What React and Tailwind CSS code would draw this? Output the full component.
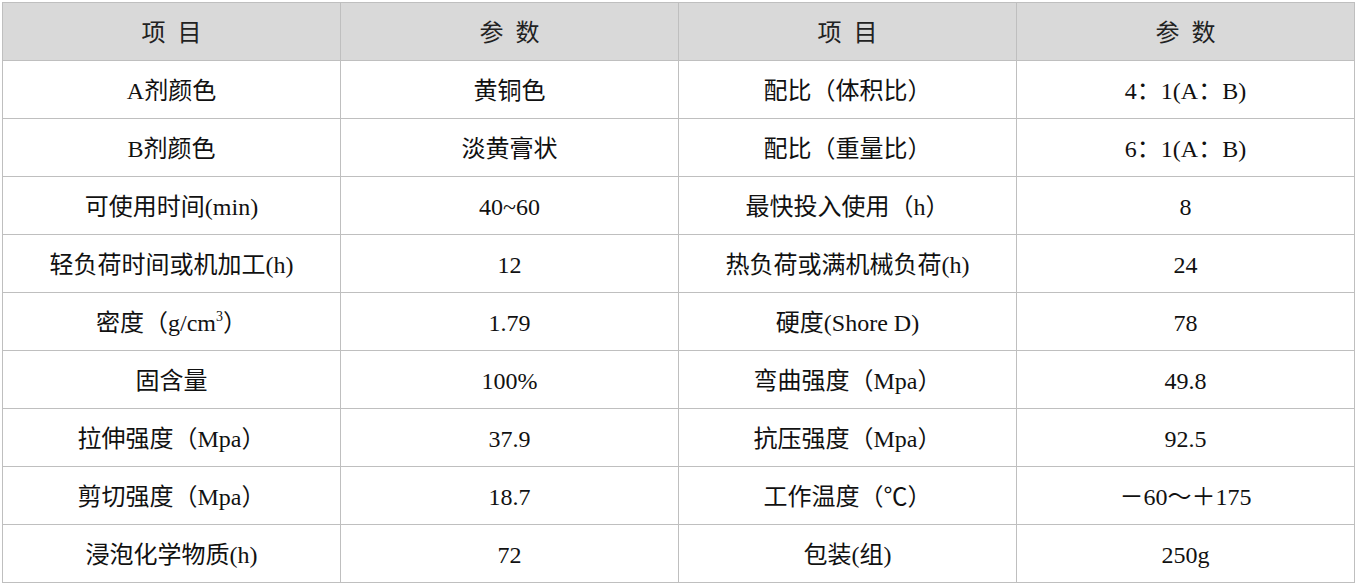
import React from "react";

const rows = [
  ["A剂颜色", "黄铜色", "配比（体积比）", "4：1(A：B)"],
  ["B剂颜色", "淡黄膏状", "配比（重量比）", "6：1(A：B)"],
  ["可使用时间(min)", "40~60", "最快投入使用（h）", "8"],
  ["轻负荷时间或机加工(h)", "12", "热负荷或满机械负荷(h)", "24"],
  ["DENSITY", "1.79", "硬度(Shore D)", "78"],
  ["固含量", "100%", "弯曲强度（Mpa）", "49.8"],
  ["拉伸强度（Mpa）", "37.9", "抗压强度（Mpa）", "92.5"],
  ["剪切强度（Mpa）", "18.7", "工作温度（℃）", "－60～＋175"],
  ["浸泡化学物质(h)", "72", "包装(组)", "250g"],
];

const font = {
  fontFamily: '"Liberation Serif", "Noto Sans CJK SC", serif',
};

export default function App() {
  return (
    <div className="w-[1357px] h-[585px] bg-white overflow-hidden" style={font}>
      <div className="ml-[2px] mt-[2px] grid grid-cols-[repeat(4,338px)] auto-rows-[58px] border-l border-t border-[#bfbfbf] w-fit text-[24px] text-[#111111]">
        {["项\u2002目", "参\u2002数", "项\u2002目", "参\u2002数"].map((h, i) => (
          <div
            key={"h" + i}
            className="flex items-center justify-center pt-[3px] bg-[#d9d9d9] border-r border-b border-[#bfbfbf] text-[#222222]"
          >
            {h}
          </div>
        ))}
        {rows.map((r, ri) =>
          r.map((c, ci) => (
            <div
              key={ri + "-" + ci}
              className="flex items-center justify-center pt-[3px] border-r border-b border-[#bfbfbf] whitespace-nowrap"
            >
              {c === "DENSITY" ? (
                <span>
                  密度（g/cm
                  <span className="text-[14px] relative top-[-10px]">3</span>）
                </span>
              ) : (
                c
              )}
            </div>
          ))
        )}
      </div>
    </div>
  );
}
